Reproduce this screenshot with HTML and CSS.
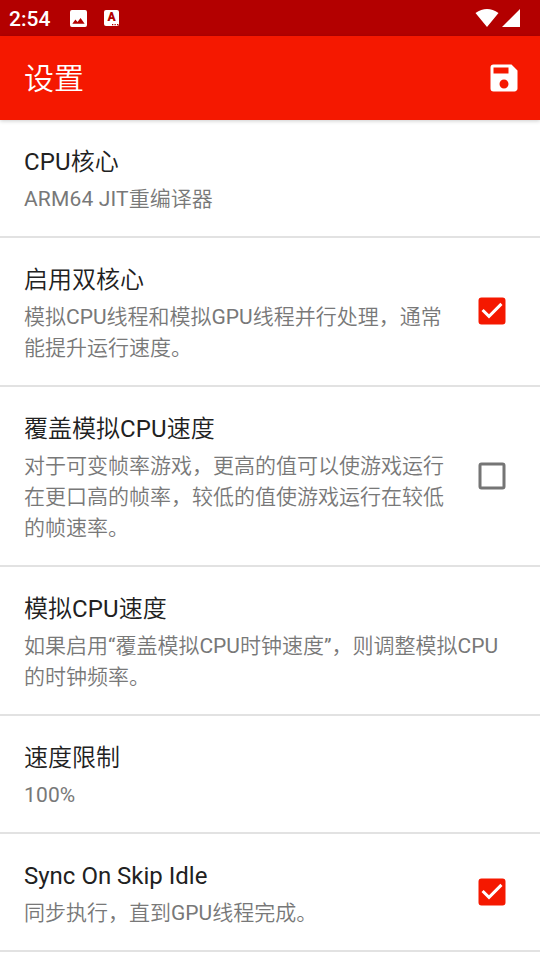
FILE: index.html
```html
<!DOCTYPE html>
<html lang="zh-CN">
<head>
<meta charset="utf-8">
<title>设置</title>
<link rel="stylesheet" href="styles.css">
</head>
<body>
<header class="status">
  <span class="time">2:54</span>
  <svg class="pic" viewBox="0 0 18 18"><path fill="#fff" fill-rule="evenodd" d="M2 0h14a2 2 0 0 1 2 2v14a2 2 0 0 1-2 2H2a2 2 0 0 1-2-2V2a2 2 0 0 1 2-2zM2.500 14.500h13L11.200 8.500 8 12.600 5.700 10z"/></svg>
  <span class="badge">A<svg class="dots" viewBox="0 0 7 2"><path fill="#b30000" d="M0 0h1.300v1.300H0zM2.500 0h1.300v1.300H2.500zM5 0h1.300v1.300H5z"/></svg></span>
  <svg class="signal" viewBox="0 0 46 20"><path fill="#fff" d="M.5 5Q12-3 23.500 5L12 19zM45 1v18H27z"/></svg>
</header>
<div class="toolbar">
  <h1>设置</h1>
  <svg class="save" viewBox="0 0 24 24"><path fill="#fff" d="M17 3H5a2 2 0 0 0-2 2v14a2 2 0 0 0 2 2h14c1.100 0 2-.900 2-2V7l-4-4zm-5 16c-1.660 0-3-1.340-3-3s1.340-3 3-3 3 1.340 3 3-1.340 3-3 3zm3-10H5V5h10v4z"/></svg>
</div>
<main>
  <section class="row"><div class="text"><h2><span class="latin">CPU</span>核心</h2><p><span class="latin">ARM64 JIT</span>重编译器</p></div></section>
  <section class="row"><div class="text"><h2>启用双核心</h2><p>模拟CPU线程和模拟GPU线程并行处理，通常<br>能提升运行速度。</p></div>
    <svg class="check" viewBox="0 0 24 24"><path fill="#f51800" d="M19 3H5a2 2 0 0 0-2 2v14a2 2 0 0 0 2 2h14a2 2 0 0 0 2-2V5a2 2 0 0 0-2-2zm-9 14l-5-5 1.410-1.410L10 14.170l7.590-7.590L19 8l-9 9z"/></svg></section>
  <section class="row"><div class="text"><h2>覆盖模拟<span class="latin">CPU</span>速度</h2><p>对于可变帧率游戏，更高的值可以使游戏运行<br>在更口高的帧率，较低的值使游戏运行在较低<br>的帧速率。</p></div>
    <svg class="check" viewBox="0 0 24 24"><path fill="#757575" d="M19 5v14H5V5h14m0-2H5a2 2 0 0 0-2 2v14a2 2 0 0 0 2 2h14a2 2 0 0 0 2-2V5a2 2 0 0 0-2-2z"/></svg></section>
  <section class="row"><div class="text"><h2>模拟<span class="latin">CPU</span>速度</h2><p>如果启用“覆盖模拟CPU时钟速度”，则调整模拟CPU<br>的时钟频率。</p></div></section>
  <section class="row"><div class="text"><h2>速度限制</h2><p class="latin">100%</p></div></section>
  <section class="row"><div class="text"><h2>Sync On Skip Idle</h2><p>同步执行，直到GPU线程完成。</p></div>
    <svg class="check" viewBox="0 0 24 24"><path fill="#f51800" d="M19 3H5a2 2 0 0 0-2 2v14a2 2 0 0 0 2 2h14a2 2 0 0 0 2-2V5a2 2 0 0 0-2-2zm-9 14l-5-5 1.410-1.410L10 14.170l7.590-7.590L19 8l-9 9z"/></svg></section>
</main>
</body>
</html>
```
FILE: styles.css
```css
* { box-sizing: border-box; margin: 0; padding: 0; }
body { width: 540px; height: 960px; overflow: hidden; background: #fff; font-family: Roboto, "Noto Sans CJK SC DemiLight", "Noto Sans CJK SC Light", "Noto Sans CJK SC", sans-serif; }
.status { height: 36px; background: #b30000; color: #fff; display: flex; align-items: center; padding: 0 19px 0 9px; }
.time { font-size: 21px; font-weight: 500; width: 61px; line-height: 24px; padding-top: 1px; }
.pic { width: 17px; height: 17px; }
.badge { position: relative; margin-left: 17px; width: 15px; height: 16px; border-radius: 2px; background: #fff; color: #b30000; font-size: 12px; line-height: 15px; font-weight: 900; text-align: center; }
.dots { position: absolute; right: 0; bottom: 0; width: 7px; height: 2px; }
.signal { width: 46px; height: 20px; margin-left: auto; }
.toolbar { position: relative; height: 84px; background: #f51800; color: #fff; display: flex; align-items: center; justify-content: space-between; padding: 0 18px 0 24px; box-shadow: 0 1px 4px rgba(0, 0, 0, .2); }
h1 { font-size: 30px; font-weight: 400; line-height: 36px; padding-top: 2px; }
.save { width: 36px; height: 36px; }
.row { display: flex; align-items: center; justify-content: space-between; padding: 0 30px 0 24px; border-bottom: 2px solid #e2e2e2; }
.text { padding: 24px 0 21px; }
h2 { font-size: 24px; font-weight: 400; line-height: 36px; color: #212121; white-space: nowrap; }
p { font-size: 21px; line-height: 31px; color: #787878; white-space: nowrap; margin-top: 4px; }
.latin { letter-spacing: .15px; }
.check { width: 36px; height: 36px; flex: none; margin-bottom: .5px; }
```
